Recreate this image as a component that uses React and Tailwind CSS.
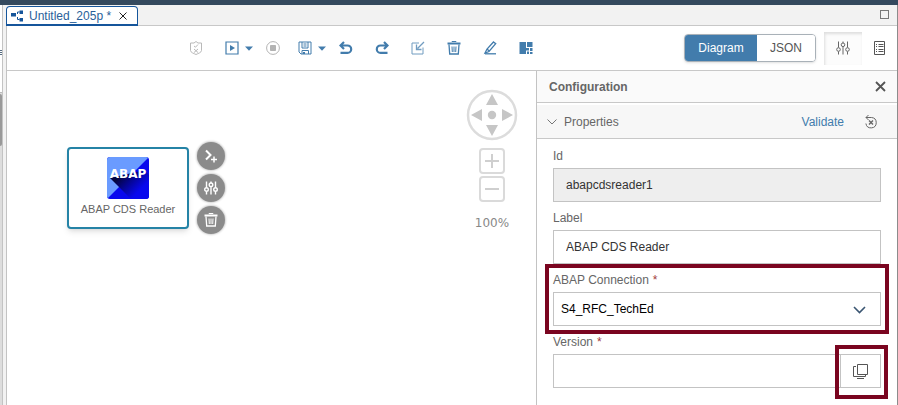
import React from "react";

const BLUE = "#427cac";

function Svg({ size = 14, stroke = "currentColor", sw = 1, children }) {
  return (
    <svg width={size} height={size} viewBox="0 0 14 14" fill="none" stroke={stroke} strokeWidth={sw} aria-hidden="true">
      {children}
    </svg>
  );
}

function ToolButton({ label, className = "", children }) {
  return (
    <button type="button" aria-label={label} className={`flex h-6 w-5 items-center justify-center text-[#427cac] ${className}`}>
      {children}
    </button>
  );
}

function Caret({ label }) {
  return (
    <button type="button" aria-label={label} className="flex h-6 w-3.5 items-center justify-center">
      <svg width="8" height="5" viewBox="0 0 8 5" aria-hidden="true"><path d="M0 0.5h8L4 4.8z" fill={BLUE} /></svg>
    </button>
  );
}

function SlidersIcon({ size = 14, sw = 1 }) {
  return (
    <Svg size={size} sw={sw}>
      <path d="M2.5 0.5v6M2.5 10.5v3M7 0.5v1.5M7 6v7.5M11.5 0.5v6M11.5 10.5v3" />
      <circle cx="2.5" cy="8.5" r="1.8" />
      <circle cx="7" cy="3.8" r="1.8" />
      <circle cx="11.5" cy="8.5" r="1.8" />
    </Svg>
  );
}

function TrashIcon({ size = 14 }) {
  return (
    <Svg size={size}>
      <path d="M0.5 2.5h13" strokeWidth="2" />
      <path d="M5 1V0.5h4V1" />
      <path d="M2 3.5l0.7 9.5h8.6L12 3.5" strokeWidth="1.3" />
      <path d="M5 5.5l0.3 5.5M7 5.5V11M9 5.5L8.7 11" />
    </Svg>
  );
}

function Tab() {
  return (
    <div className="mt-px flex h-5 items-center rounded-t border border-b-2 border-[#15559b] bg-white pr-2.5 pl-1 text-[#2a5f9a]">
      <svg width="12" height="12" viewBox="0 0 12 12" className="mr-1.5" fill="#15559b" aria-hidden="true">
        <path d="M0 3h5v3.500H0zM8.500 0.500H12v3.500H8.500zM8.500 8H12v3.500H8.500z" />
        <path d="M8.500 2H6.500v2M6.500 7v2.500h2" fill="none" stroke="#15559b" />
      </svg>
      <span className="whitespace-pre">Untitled_205p *</span>
      <button type="button" aria-label="Close tab" className="ml-2 text-[#222]">
        <svg width="8" height="8" viewBox="0 0 8 8" stroke="currentColor" aria-hidden="true"><path d="M0.5 0.5l7 7M7.5 0.5l-7 7" /></svg>
      </button>
    </div>
  );
}

function Toolbar() {
  return (
    <div className="flex h-[45px] shrink-0 items-center border-b border-[#c8c8c8] bg-white">
      <div className="flex flex-1 items-center justify-center gap-4 pl-[30px]">
        <ToolButton label="Validate graph" className="opacity-80">
          <Svg stroke="#a8a8a8">
            <path d="M7 0.5L9 2h3.5v7.5C12.5 11.5 9 12.5 7 13.500 5 12.5 1.5 11.5 1.5 9.500V2H5z" />
            <path d="M5 5l1.5 1.200L9 3.500M5 8l4 3.500M9 8l-4 3.500" />
          </Svg>
        </ToolButton>
        <div className="-mr-[9px] flex">
          <ToolButton label="Run">
            <Svg><path d="M1 1h12v12H1z" strokeWidth="1.200" /><path d="M5 4l5 3-5 3z" fill="currentColor" stroke="none" /></Svg>
          </ToolButton>
          <Caret label="Run options" />
        </div>
        <ToolButton label="Stop" className="-mr-1">
          <Svg stroke="#b3b3b3"><circle cx="7" cy="7" r="6.400" /><path d="M4.500 4.500h5v5h-5z" fill="#b3b3b3" /></Svg>
        </ToolButton>
        <div className="-mr-[9px] flex">
          <ToolButton label="Save">
            <Svg>
              <path d="M1 1h12v12H3l-2-2zM4 1v6h6V1M4 13V9.500h6.500V13M5.500 3h3M5.500 5h3" />
              <path d="M5 11h2v2H5z" fill="currentColor" stroke="none" />
            </Svg>
          </ToolButton>
          <Caret label="Save options" />
        </div>
        <ToolButton label="Undo">
          <Svg sw={2.2}><path d="M5 1L1.500 4.500 5 8M2 4.500h6.500a3.700 3.700 0 0 1 0 7.400H1.500" /></Svg>
        </ToolButton>
        <ToolButton label="Redo">
          <Svg sw={2.2}><path d="M9 1l3.500 3.500L9 8M12 4.500H5.500a3.700 3.700 0 0 0 0 7.400h7" /></Svg>
        </ToolButton>
        <ToolButton label="Import">
          <Svg><g opacity="0.75"><path d="M8 2H1v11h11V6.500" /><path d="M13 1L6.500 7.500M5.500 3.500v5h5" strokeWidth="1.300" /></g></Svg>
        </ToolButton>
        <ToolButton label="Delete"><TrashIcon /></ToolButton>
        <ToolButton label="Edit">
          <Svg sw={1.3}><path d="M10.500 1l2.200 1.700-6.700 7.800-4 1.500 2-4zM4 8l2.200 2" /><path d="M2 12.800h11" /></Svg>
        </ToolButton>
        <ToolButton label="Auto layout">
          <svg width="14" height="14" viewBox="0 0 14 14" fill="currentColor" aria-hidden="true">
            <path d="M0.5 1H7v12H0.500zM8 1h5.500v5H8zM7 7h3v2.500H7zM11 7h2.500v3H11zM8 10.500h2V13H8zM11 11h2.500v2H11z" />
          </svg>
        </ToolButton>
      </div>
      <div className="flex items-center pr-[11px]">
        <div className="flex h-7 overflow-hidden rounded border border-[#a9b1b8] shadow">
          <button type="button" aria-pressed="true" className="w-[72px] bg-[#427cac] text-white">Diagram</button>
          <button type="button" aria-pressed="false" className="w-[58px] bg-white text-[#555]">JSON</button>
        </div>
        <button type="button" aria-label="Show configuration" className="ml-2 flex h-[33px] w-[38px] items-center justify-center bg-[#fcfcfc] text-[#666] shadow-[inset_1px_2px_3px_#dedede]">
          <SlidersIcon />
        </button>
        <button type="button" aria-label="Show documentation" className="ml-3 text-[#555]">
          <svg width="12" height="14" viewBox="0 0 12 14" fill="none" stroke="currentColor" aria-hidden="true">
            <path d="M0.500 0.500h10v13h-10zM4.500 3.500h5M4.500 5.500h5M4.500 8.500h5M4.500 10.500h5M2 3.500h1M2 5.500h1M2 8.500h1M2 10.500h1" />
          </svg>
        </button>
      </div>
    </div>
  );
}

function NodeAction({ label, children }) {
  return (
    <button type="button" aria-label={label} className="flex size-7 items-center justify-center rounded-full bg-[#8b8b8b] text-white shadow-[0_0_2px_1px_#d0d0d0]">
      {children}
    </button>
  );
}

function OperatorNode() {
  return (
    <div className="absolute top-[71px] left-[60px] flex items-center gap-2">
      <div className="flex h-[82px] w-[122px] flex-col items-center rounded border-2 border-[#2583a6] bg-white pt-2 shadow-md">
        <svg width="42" height="42" viewBox="0 0 42 42" role="img" aria-label="ABAP">
          <defs>
            <clipPath id="tile"><rect width="42" height="42" rx="3" /></clipPath>
            <linearGradient id="cast" gradientUnits="userSpaceOnUse" x1="14" y1="18" x2="31" y2="35">
              <stop offset="0" stopColor="#04043c" />
              <stop offset="0.4" stopColor="#050588" />
              <stop offset="1" stopColor="#0808ee" />
            </linearGradient>
          </defs>
          <g clipPath="url(#tile)">
            <path d="M0 0h42v42H0z" fill="#0808ee" />
            <path d="M0 0h42L0 42z" fill="#6a9bff" />
            <path d="M3 21L24 42h18V18l-4-5z" fill="url(#cast)" />
          </g>
          <text x="21" y="21" textAnchor="middle" fill="#fff" fontSize="12" fontWeight="700" fontFamily="DejaVu Sans, sans-serif">ABAP</text>
        </svg>
        <span className="mt-0.5 text-[11px] leading-4 whitespace-nowrap">ABAP CDS Reader</span>
      </div>
      <div className="flex flex-col gap-1">
        <NodeAction label="Add port">
          <Svg sw={2}><path d="M2 1.500l4.500 4.500L2 10.500" /><path d="M7 10.500h6M10 7.500v6" strokeWidth="1.500" /></Svg>
        </NodeAction>
        <NodeAction label="Configure"><SlidersIcon sw={1.4} /></NodeAction>
        <NodeAction label="Delete node"><TrashIcon /></NodeAction>
      </div>
    </div>
  );
}

function ZoomButton({ label, d }) {
  return (
    <button type="button" aria-label={label} className="flex size-[26px] items-center justify-center rounded border-2 border-[#dadada] text-[#cfcfcf]">
      <Svg size={14} sw={2}><path d={d} /></Svg>
    </button>
  );
}

function Canvas() {
  return (
    <main className="relative min-w-0 flex-1 bg-white">
      <OperatorNode />
      <div className="absolute top-[18px] right-[18px] flex flex-col items-center">
        <button type="button" aria-label="Pan">
          <svg width="52" height="52" viewBox="0 0 52 52" fill="#c6c6c6" aria-hidden="true">
            <circle cx="26" cy="26" r="24" fill="none" stroke="#dcdcdc" strokeWidth="2.500" />
            <circle cx="26" cy="26" r="4.200" />
            <path d="M26 5l6 11H20zM26 47l6-11H20zM5 26l11-6v12zM47 26l-11-6v12z" />
          </svg>
        </button>
        <div className="mt-[7px] flex flex-col gap-0.5">
          <ZoomButton label="Zoom in" d="M0 7h14M7 0v14" />
          <ZoomButton label="Zoom out" d="M0 7h14" />
        </div>
        <span className="mt-[13px] font-['DejaVu_Sans',sans-serif] leading-4 text-[#888]">100%</span>
      </div>
    </main>
  );
}

function Field({ id, label, required, highlighted, children }) {
  return (
    <div className="relative">
      <label htmlFor={id} className="flex h-5 items-start gap-1 leading-4">
        {label}
        {required && <span className="text-[#a23b3b]">*</span>}
      </label>
      {children}
      {highlighted && <div className="pointer-events-none absolute -inset-x-2 -top-2 -bottom-2 border-4 border-[#7a0520]" />}
    </div>
  );
}

const box = "h-[34px] w-full rounded-none border border-[#c3c3c3] outline-none";

function ConfigurationPanel() {
  return (
    <aside className="w-[361px] shrink-0 border-l border-[#c3c3c3] bg-white">
      <header className="flex h-8 items-center justify-between border-b border-[#c8c8c8] bg-[#fafafa] pr-[11px] pl-3">
        <h2 className="font-bold">Configuration</h2>
        <button type="button" aria-label="Close panel" className="text-[#555]">
          <svg width="11" height="11" viewBox="0 0 11 11" stroke="currentColor" strokeWidth="1.800" aria-hidden="true"><path d="M1 1l9 9M10 1l-9 9" /></svg>
        </button>
      </header>
      <div className="mt-0.5 flex h-[34px] items-center border-b border-[#c8c8c8] bg-[#f7f7f7] pr-[19px] pl-2.5">
        <button type="button" aria-expanded="true" className="flex items-center gap-[7px]">
          <svg width="10" height="6" viewBox="0 0 10 6" fill="none" stroke="#777" aria-hidden="true"><path d="M0.500 0.500L5 5l4.500-4.500" /></svg>
          Properties
        </button>
        <button type="button" className="ml-auto text-[#427cac]">Validate</button>
        <button type="button" aria-label="Reset" className="ml-5 text-[#666]">
          <Svg><path d="M2 2.500h5.500a5.200 5.200 0 1 1-5.600 6M4.500 0l-2.500 2.500L4.500 5" /><path d="M5 5.500l4 4M9 5.500l-4 4" strokeWidth="1.400" /></Svg>
        </button>
      </div>
      <form className="flex flex-col gap-2 px-4 pt-[9px] pb-4">
        <Field id="node-id" label="Id">
          <input id="node-id" readOnly defaultValue="abapcdsreader1" className={`${box} bg-[#eeeeee] px-3 text-[#333]`} />
        </Field>
        <Field id="node-label" label="Label">
          <input id="node-label" defaultValue="ABAP CDS Reader" className={`${box} bg-white px-3 text-[#333]`} />
        </Field>
        <Field id="connection" label="ABAP Connection" required highlighted>
          <div className="relative">
            <select id="connection" defaultValue="S4_RFC_TechEd" className={`${box} appearance-none bg-white pr-9 pl-[7px] text-black`}>
              <option>S4_RFC_TechEd</option>
            </select>
            <svg width="13" height="8" viewBox="0 0 13 8" fill="none" stroke="#3b5672" strokeWidth="1.600" className="pointer-events-none absolute top-3.5 right-[15px]" aria-hidden="true">
              <path d="M1 1l5.500 5.500L12 1" />
            </svg>
          </div>
        </Field>
        <Field id="version" label="Version" required>
          <div className="flex">
            <input id="version" className={`${box} min-w-0 flex-1 bg-white px-3`} />
            <div className="relative">
              <button type="button" aria-label="Browse versions" className="flex h-[34px] w-10 items-center justify-center border border-l-0 border-[#c3c3c3] text-[#555]">
                <svg width="15" height="15" viewBox="0 0 15 15" fill="none" stroke="currentColor" aria-hidden="true">
                  <path d="M4.500 0.500h10v10h-10zM3 2.500H0.500v10h12V11M4 14.500h7" />
                </svg>
              </button>
              <div className="pointer-events-none absolute -top-[9px] -right-[7px] -bottom-[11px] -left-1.5 border-4 border-[#7a0520]" />
            </div>
          </div>
        </Field>
      </form>
    </aside>
  );
}

export default function App() {
  return (
    <div className="flex min-h-screen flex-col bg-[#f2f2f2] font-['Liberation_Sans',Arial,sans-serif] text-[12px] text-[#666]">
      <div className="h-[5px] bg-[#34495e]" />
      <div className="flex flex-1">
        <div className="flex w-[3px] shrink-0 flex-col border-r border-[#c3c3c3] bg-[#dddddd]">
          <div className="flex h-[88px] flex-col gap-px border-b border-[#bbb] bg-white pt-[45px]">
            <div className="h-px bg-[#556b80]" />
            <div className="h-px bg-[#556b80]" />
            <div className="h-px bg-[#556b80]" />
          </div>
          <div className="mt-px h-[52px] rounded-r bg-[#999]" />
        </div>
        <div className="ml-[3px] flex min-w-0 flex-1 flex-col border-r border-[#8c8c8c]">
          <div className="flex h-[21px] items-start justify-between border-b border-[#c8c8c8]">
            <Tab />
            <button type="button" aria-label="Maximize" className="mt-[5px] mr-2 h-[9px] w-[9px] border border-[#777]" />
          </div>
          <div className="flex flex-1 flex-col border-l border-[#c3c3c3]">
            <Toolbar />
            <div className="flex flex-1">
              <Canvas />
              <ConfigurationPanel />
            </div>
          </div>
        </div>
      </div>
    </div>
  );
}
